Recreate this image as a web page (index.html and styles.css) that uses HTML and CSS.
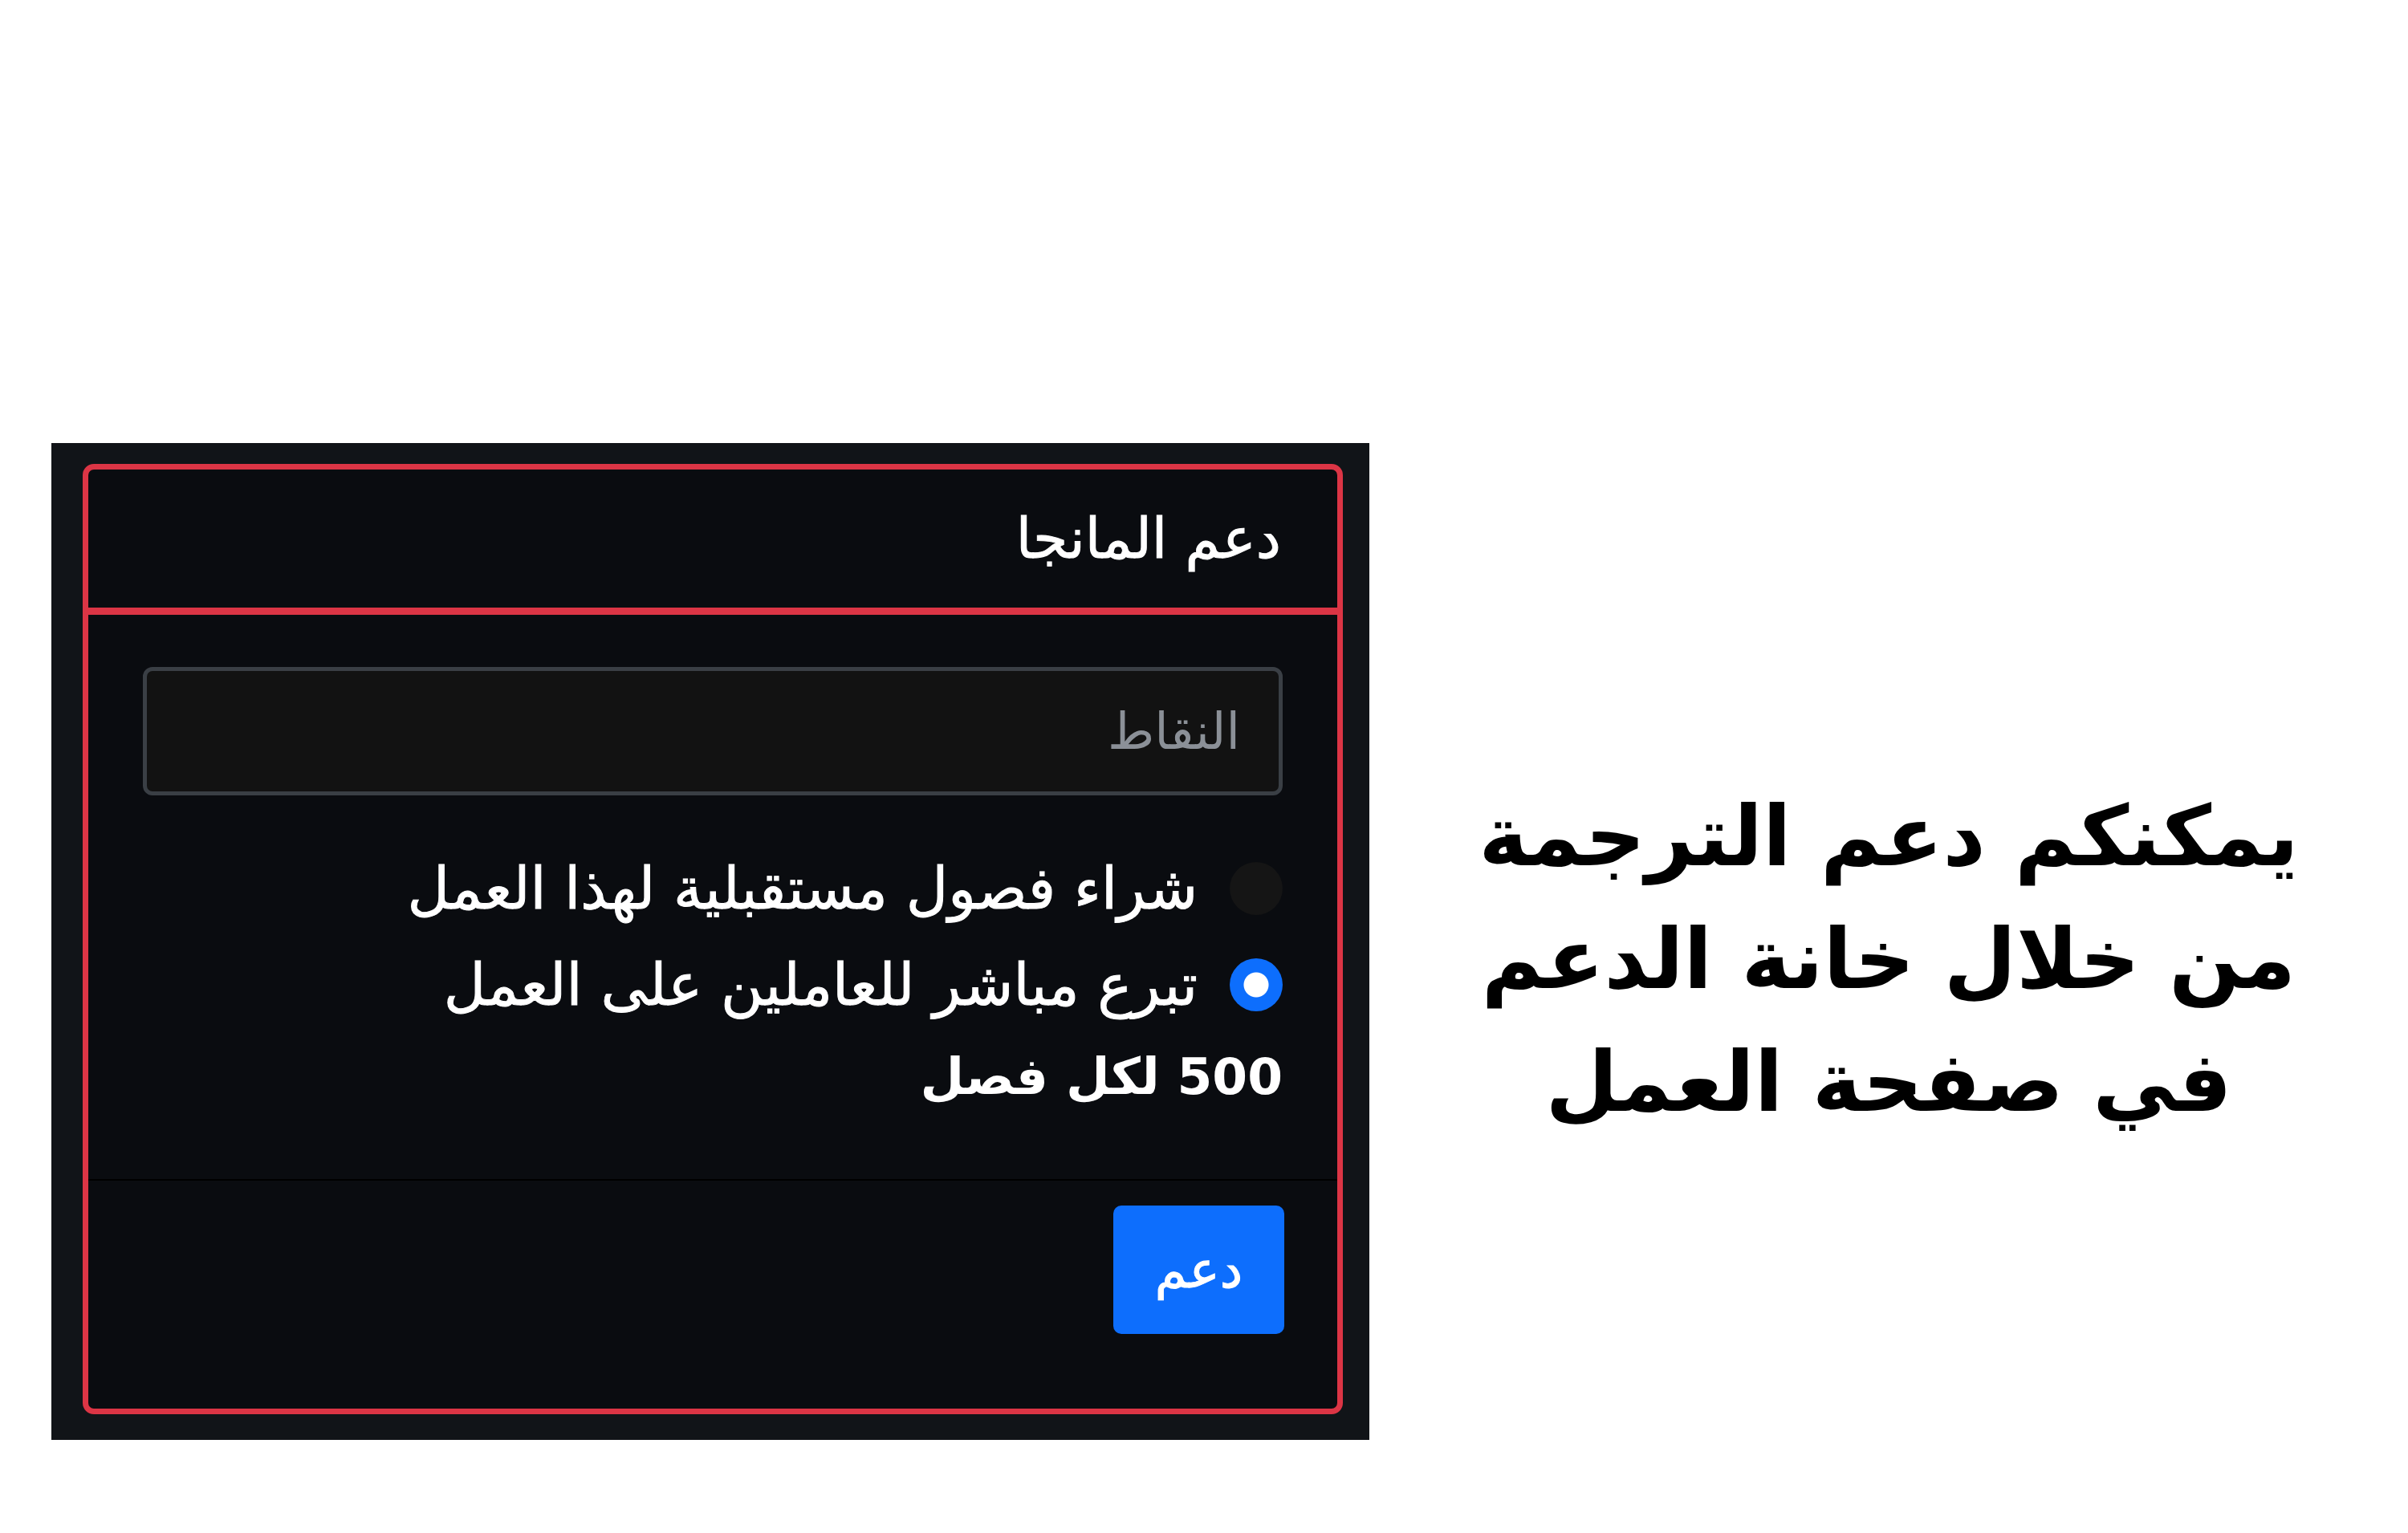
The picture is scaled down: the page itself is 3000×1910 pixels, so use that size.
FILE: index.html
```html
<!DOCTYPE html>
<html lang="ar">
<head>
    <meta charset="UTF-8">
    <title>دعم المانجا</title>
    <link rel="stylesheet" href="styles.css">
</head>
<body>
    <div class="page">
        <div class="panel">
            <div class="card" dir="rtl">
                <div class="card-header">دعم المانجا</div>
                <div class="card-body">
                    <input class="points" type="text" placeholder="النقاط">
                    <label class="option">
                        <input type="radio" name="support">
                        <span>شراء فصول مستقبلية لهذا العمل</span>
                    </label>
                    <label class="option">
                        <input type="radio" name="support" checked>
                        <span>تبرع مباشر للعاملين على العمل</span>
                    </label>
                    <p class="price">500 لكل فصل</p>
                </div>
                <div class="card-footer">
                    <button class="btn-support">دعم</button>
                </div>
            </div>
        </div>
        <div class="note" dir="rtl">
            يمكنكم دعم الترجمة<br>
            من خلال خانة الدعم<br>
            في صفحة العمل
        </div>
    </div>
</body>
</html>
```

FILE: styles.css
```css
body {
    margin: 0;
    background-color: #ffffff;
    font-family: "DejaVu Sans", "Noto Sans", sans-serif;
}
.page {
    display: flex;
    padding: 552px 0 0 64px;
}
.panel {
    width: 1642px;
    box-sizing: border-box;
    padding: 26px 33px 32px 39px;
    background-color: #111418;
}
.card {
    border: 7px solid #dc3545;
    border-radius: 14px;
    background-color: #0a0c10;
    color: #ffffff;
    overflow: hidden;
}
.card-header {
    height: 172px;
    display: flex;
    align-items: center;
    padding: 0 70px;
    border-bottom: 9px solid #dc3545;
    font-size: 70px;
    -webkit-text-stroke: 1px #ffffff;
}
.card-body {
    padding: 65px 68px 82px;
}
.points {
    display: block;
    width: 100%;
    height: 160px;
    box-sizing: border-box;
    padding: 0 48px;
    border: 5px solid #3a3f45;
    border-radius: 12px;
    background-color: #121212;
    color: #ffffff;
    font-family: inherit;
    font-size: 63px;
    outline: none;
}
.points::placeholder {
    color: #8b9097;
}
.option {
    display: flex;
    align-items: center;
    gap: 40px;
    height: 120px;
    font-size: 72px;
    -webkit-text-stroke: 1px #ffffff;
}
.points + .option {
    margin-top: 56px;
}
.option input {
    appearance: none;
    width: 66px;
    height: 66px;
    margin: 0;
    border-radius: 50%;
    background-color: #151515;
    flex-shrink: 0;
}
.option input:checked {
    background-color: #0d6efd;
    background-image: radial-gradient(circle, #ffffff 0 15px, transparent 16px);
}
.price {
    margin: 10px 0 0;
    line-height: 90px;
    font-size: 63px;
    font-weight: bold;
}
.card-footer {
    border-top: 2px solid #000000;
    padding: 31px 66px 93px;
}
.btn-support {
    width: 213px;
    height: 160px;
    border: none;
    border-radius: 10px;
    background-color: #0d6efd;
    color: #ffffff;
    font-family: inherit;
    font-size: 64px;
    -webkit-text-stroke: 1px #ffffff;
}
.note {
    flex: 1;
    margin-top: 414px;
    text-align: center;
    line-height: 153px;
    font-size: 104px;
    font-weight: bold;
    color: #000000;
}
```
